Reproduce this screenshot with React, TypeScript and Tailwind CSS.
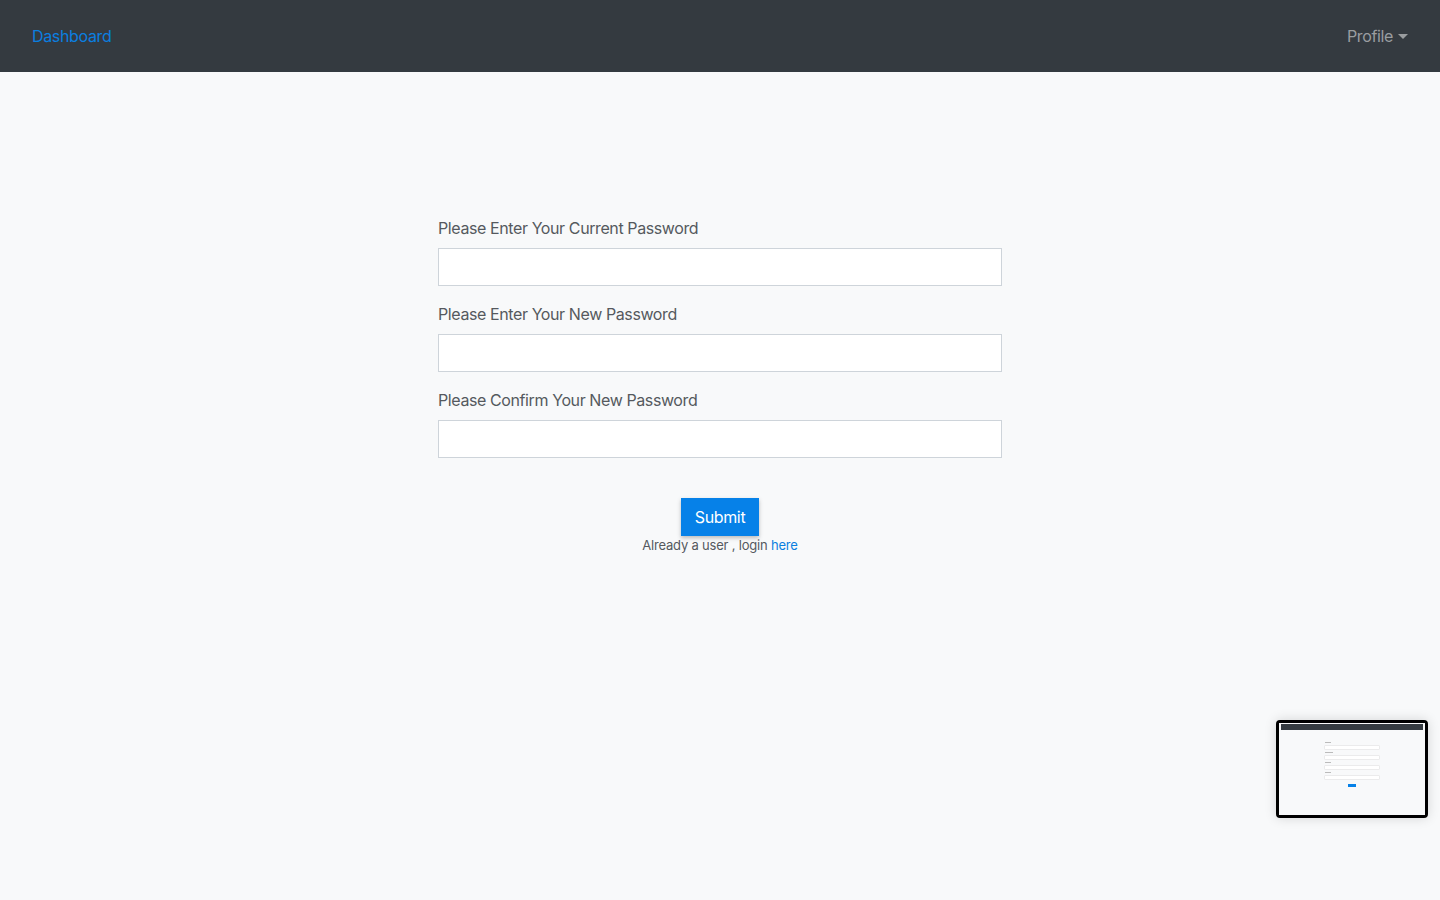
import React from "react";

function Field({ label }: { label: string }) {
  return (
    <div className="mb-4 flex flex-col">
      <label className="mb-2 text-base leading-6 tracking-[-0.4px] text-[#55595e]">{label}</label>
      <input
        type="password"
        className="h-[38px] w-full border border-[#ced4da] bg-white px-3 outline-none"
      />
    </div>
  );
}

function Preview() {
  return (
    <div className="fixed bottom-[82px] right-[12px] h-[98px] w-[152px] rounded-[4px] border-[3px] border-black bg-black shadow-[0_0_12px_rgba(0,0,0,0.15)]">
      <div className="flex h-full w-full flex-col bg-[#f8f9fa]">
        <div className="mx-[2px] mt-[1px] h-[6px] bg-[#343a40]" />
        <div className="mx-auto mt-[12px] flex w-[54px] flex-col gap-[3px]">
          <div className="h-[1px] w-[6px] bg-[#bbb]" />
          <div className="h-[3px] bg-white shadow-[0_0_0_0.5px_#ddd]" />
          <div className="h-[1px] w-[8px] bg-[#bbb]" />
          <div className="h-[3px] bg-white shadow-[0_0_0_0.5px_#ddd]" />
          <div className="h-[1px] w-[6px] bg-[#bbb]" />
          <div className="h-[3px] bg-white shadow-[0_0_0_0.5px_#ddd]" />
          <div className="h-[1px] w-[6px] bg-[#bbb]" />
          <div className="h-[3px] bg-white shadow-[0_0_0_0.5px_#ddd]" />
          <div className="mx-auto mt-[2px] h-[3px] w-[8px] bg-[#0681e8]" />
        </div>
      </div>
    </div>
  );
}

export default function App() {
  return (
    <div className="min-h-[900px] bg-[#f8f9fa] font-['Inter','Liberation_Sans',sans-serif]">
      <nav className="flex h-[72px] items-center justify-between bg-[#343a40] px-8">
        <a className="text-base tracking-[-0.35px] text-[#0a7fe0]">Dashboard</a>
        <button className="flex items-center text-base tracking-[-0.35px] text-[#9a9da0]">
          Profile
          <span className="ml-[5px] mt-[1px] h-0 w-0 border-x-[5px] border-t-[5px] border-x-transparent border-t-[#9a9da0]" />
        </button>
      </nav>
      <main className="flex justify-center pt-[144px]">
        <form className="w-[564px]">
          <Field label="Please Enter Your Current Password" />
          <Field label="Please Enter Your New Password" />
          <Field label="Please Confirm Your New Password" />
          <div className="mt-[40px] flex flex-col items-center">
            <button
              type="button"
              className="h-[38px] w-[78px] bg-[#0681e8] text-base tracking-[-0.35px] text-white shadow-[0_2px_4px_rgba(0,0,0,0.25)]"
            >
              Submit
            </button>
            <p className="text-[13px] leading-[18px] tracking-[-0.2px] text-[#55595e]">
              Already a user , login <a className="text-[#0a7fe0]">here</a>
            </p>
          </div>
        </form>
      </main>
      <Preview />
    </div>
  );
}
